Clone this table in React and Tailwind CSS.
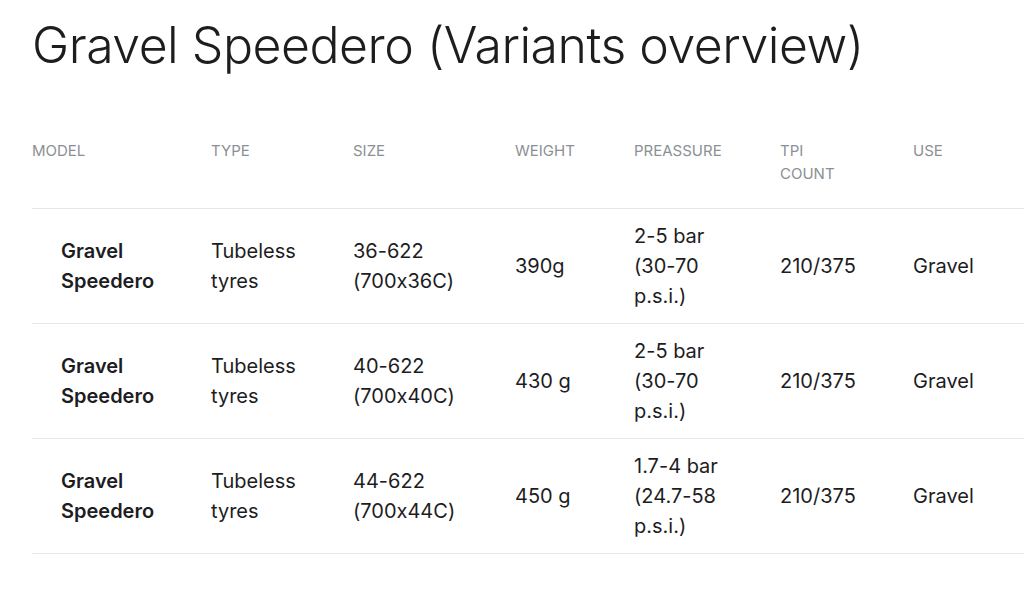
const rows = [
  {
    size: ["36-622", "(700x36C)"],
    weight: "390g",
    pressure: ["2-5 bar", "(30-70", "p.s.i.)"],
  },
  {
    size: ["40-622", "(700x40C)"],
    weight: "430 g",
    pressure: ["2-5 bar", "(30-70", "p.s.i.)"],
  },
  {
    size: ["44-622", "(700x44C)"],
    weight: "450 g",
    pressure: ["1.7-4 bar", "(24.7-58", "p.s.i.)"],
  },
];

const Lines = ({ items }) =>
  items.map((t, i) => (
    <span key={i} className="block whitespace-nowrap">
      {t}
    </span>
  ));

export default function App() {
  return (
    <div className="min-h-screen bg-white overflow-hidden font-['Inter',sans-serif] [font-feature-settings:'calt'_0] text-[#1d1d1f]">
      <h1 className="pl-8 pt-[14px] text-[50px] leading-[62px] font-light tracking-[-0.5px] whitespace-nowrap">
        Gravel Speedero (Variants overview)
      </h1>
      <div className="pl-8 pt-[63px]">
        <table className="table-fixed border-collapse w-[1100px] text-left">
          <colgroup>
            <col className="w-[179px]" />
            <col className="w-[142px]" />
            <col className="w-[162px]" />
            <col className="w-[119px]" />
            <col className="w-[146px]" />
            <col className="w-[133px]" />
            <col />
          </colgroup>
          <thead>
            <tr className="border-b border-[#e7e7e7] align-top">
              <th className="pb-[23px] font-normal text-[15px] leading-[23px] text-[#8b9095] uppercase">Model</th>
              <th className="pb-[23px] font-normal text-[15px] leading-[23px] text-[#8b9095] uppercase">Type</th>
              <th className="pb-[23px] font-normal text-[15px] leading-[23px] text-[#8b9095] uppercase">Size</th>
              <th className="pb-[23px] font-normal text-[15px] leading-[23px] text-[#8b9095] uppercase">Weight</th>
              <th className="pb-[23px] font-normal text-[15px] leading-[23px] text-[#8b9095] uppercase">Preassure</th>
              <th className="pb-[23px] font-normal text-[15px] leading-[23px] text-[#8b9095] uppercase">
                <Lines items={["TPI", "COUNT"]} />
              </th>
              <th className="pb-[23px] font-normal text-[15px] leading-[23px] text-[#8b9095] uppercase">Use</th>
            </tr>
          </thead>
          <tbody className="text-[20px] leading-[30px]">
            {rows.map((r, i) => (
              <tr key={i} className="h-[115px] border-b border-[#e7e7e7] align-middle">
                <td className="pl-[29px] font-semibold">
                  <Lines items={["Gravel", "Speedero"]} />
                </td>
                <td>
                  <Lines items={["Tubeless", "tyres"]} />
                </td>
                <td>
                  <Lines items={r.size} />
                </td>
                <td>{r.weight}</td>
                <td>
                  <Lines items={r.pressure} />
                </td>
                <td>210/375</td>
                <td>Gravel</td>
              </tr>
            ))}
          </tbody>
        </table>
      </div>
    </div>
  );
}
